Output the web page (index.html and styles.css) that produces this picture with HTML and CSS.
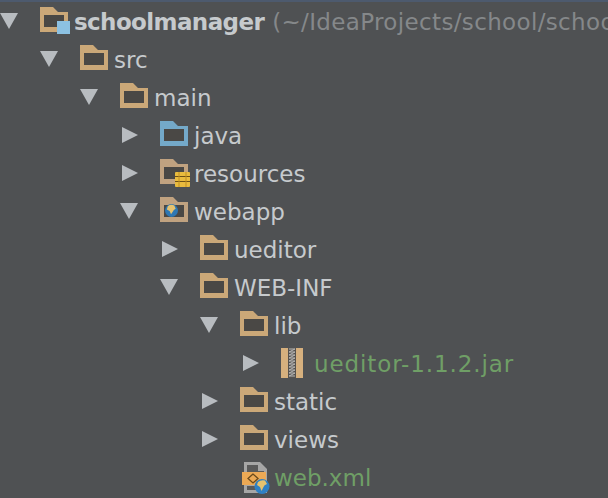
FILE: index.html
```html
<!DOCTYPE html>
<html lang="en">
<head>
    <meta charset="UTF-8">
    <title>Project tree</title>
    <link rel="stylesheet" href="styles.css">
</head>
<body>
    <svg class="defs" width="0" height="0">
        <symbol id="arrow-down" viewBox="0 0 18 18"><path d="M0 1H18L9 17Z"/></symbol>
        <symbol id="arrow-right" viewBox="0 0 18 18"><path d="M2 1L18 9L2 17Z"/></symbol>
        <symbol id="folder" viewBox="0 0 28 25">
            <path d="M0 0H13L18 5H28V25H0Z" fill="currentColor"/>
            <rect x="4" y="8" width="20" height="12" fill="#4a4845"/>
        </symbol>
    </svg>

    <div class="topline"></div>
    <ul class="tree">
        <li class="row d0">
            <svg class="arrow"><use href="#arrow-down"/></svg>
            <span class="icon">
                <svg class="folder"><use href="#folder"/></svg>
                <span class="module-badge"></span>
            </span>
            <span class="name root">schoolmanager</span>
            <span class="name path">(~/IdeaProjects/school/schoolmanager)</span>
        </li>
        <li class="row d1">
            <svg class="arrow"><use href="#arrow-down"/></svg>
            <span class="icon"><svg class="folder"><use href="#folder"/></svg></span>
            <span class="name">src</span>
        </li>
        <li class="row d2">
            <svg class="arrow"><use href="#arrow-down"/></svg>
            <span class="icon"><svg class="folder"><use href="#folder"/></svg></span>
            <span class="name">main</span>
        </li>
        <li class="row d3">
            <svg class="arrow"><use href="#arrow-right"/></svg>
            <span class="icon"><svg class="folder blue"><use href="#folder"/></svg></span>
            <span class="name">java</span>
        </li>
        <li class="row d3">
            <svg class="arrow"><use href="#arrow-right"/></svg>
            <span class="icon">
                <svg class="folder muted"><use href="#folder"/></svg>
                <svg class="coins" viewBox="0 0 15 15">
                    <rect width="15" height="15" rx="1" fill="#e9bb3e"/>
                    <path d="M0 4.500H15M0 9.500H15" stroke="#6b4f16" stroke-width="1.200"/>
                    <path d="M4 0V15M11 0V15" stroke="#c08f22" stroke-width="1"/>
                </svg>
            </span>
            <span class="name">resources</span>
        </li>
        <li class="row d3">
            <svg class="arrow"><use href="#arrow-down"/></svg>
            <span class="icon">
                <svg class="folder muted"><use href="#folder"/></svg>
                <svg class="globe" viewBox="0 0 14 14">
                    <circle cx="7" cy="7" r="7" fill="#2f78b4"/>
                    <path d="M3 2.500Q6 0 10 1.500L11.500 5Q9 6 8.500 8L6.500 11L5 7.500L2 6Z" fill="#e6c26e"/>
                </svg>
            </span>
            <span class="name">webapp</span>
        </li>
        <li class="row d4">
            <svg class="arrow"><use href="#arrow-right"/></svg>
            <span class="icon"><svg class="folder"><use href="#folder"/></svg></span>
            <span class="name">ueditor</span>
        </li>
        <li class="row d4">
            <svg class="arrow"><use href="#arrow-down"/></svg>
            <span class="icon"><svg class="folder"><use href="#folder"/></svg></span>
            <span class="name">WEB-INF</span>
        </li>
        <li class="row d5">
            <svg class="arrow"><use href="#arrow-down"/></svg>
            <span class="icon"><svg class="folder"><use href="#folder"/></svg></span>
            <span class="name">lib</span>
        </li>
        <li class="row d6">
            <svg class="arrow"><use href="#arrow-right"/></svg>
            <span class="icon jar-icon">
                <svg class="jar" viewBox="0 0 22 30">
                    <rect width="22" height="30" fill="#d6b07e"/>
                    <rect x="7" width="8" height="30" fill="#55524f"/>
                    <path d="M8 1H14L8 4H14L8 7H14L8 10H14L8 13H14L8 16H14L8 19H14L8 22H14L8 25H14L8 28H14" fill="none" stroke="#b9b9b9"/>
                </svg>
            </span>
            <span class="name jar-name">ueditor-1.1.2.jar</span>
        </li>
        <li class="row d5">
            <svg class="arrow"><use href="#arrow-right"/></svg>
            <span class="icon"><svg class="folder"><use href="#folder"/></svg></span>
            <span class="name">static</span>
        </li>
        <li class="row d5">
            <svg class="arrow"><use href="#arrow-right"/></svg>
            <span class="icon"><svg class="folder"><use href="#folder"/></svg></span>
            <span class="name">views</span>
        </li>
        <li class="row d5">
            <span class="arrow"></span>
            <span class="icon">
                <svg class="xml" viewBox="0 0 28 32">
                    <path d="M2 0H18L25 7V31H2Z" fill="#a6a6a6"/>
                    <path d="M5 3H16V9H22V10H5Z" fill="#5a5a5a"/>
                    <rect x="5" y="24" width="17" height="4" fill="#5a5a5a"/>
                    <rect y="10" width="24" height="13" fill="#eca955"/>
                    <path d="M11 12L6 16.500L11 21L16 16.500Z" fill="none" stroke="#6b4a1c" stroke-width="1.300"/>
                    <circle cx="20" cy="24.500" r="7.500" fill="#2f80c4"/>
                    <path d="M16 20Q19 17.500 23 18.500L25 22Q22 23 21.500 25L19.500 29L18 25L15 23Z" fill="#e6c26e"/>
                </svg>
            </span>
            <span class="name green">web.xml</span>
        </li>
    </ul>
</body>
</html>
```

FILE: styles.css
```css
/* Global styles */
html, body {
    margin: 0;
    padding: 0;
    height: 498px;
    overflow: hidden;
}

body {
    background-color: #4f5153;
    font-family: "DejaVu Sans", sans-serif;
    font-size: 23px;
    color: #c6cacd;
}

.defs {
    display: block;
    height: 0;
}

.topline {
    height: 2px;
    background-color: #4d5a6e;
}

.tree {
    list-style: none;
    margin: 0;
    padding: 0;
}

.row {
    display: flex;
    align-items: center;
    height: 38px;
    white-space: nowrap;
    overflow: hidden;
}

.d0 { padding-left: 0; }
.d1 { padding-left: 40px; }
.d2 { padding-left: 80px; }
.d3 { padding-left: 120px; }
.d4 { padding-left: 160px; }
.d5 { padding-left: 200px; }
.d6 { padding-left: 241px; }

.arrow {
    flex: none;
    width: 18px;
    height: 18px;
    margin-right: 22px;
    fill: #b8bcc0;
}

.icon {
    position: relative;
    top: -2px;
    flex: none;
    display: flex;
    width: 28px;
    height: 25px;
    margin-right: 6px;
}

.folder {
    width: 28px;
    height: 25px;
    color: #cba878;
}

.folder.muted {
    color: #c0a280;
}

.folder.blue {
    color: #74a9c9;
}

.module-badge {
    position: absolute;
    right: -2px;
    bottom: -2px;
    width: 13px;
    height: 13px;
    background-color: #8cc1e2;
}

.coins {
    position: absolute;
    right: -2px;
    bottom: -3px;
    width: 15px;
    height: 15px;
}

.globe {
    position: absolute;
    left: 5px;
    bottom: 5px;
    width: 13px;
    height: 13px;
}

.jar-icon {
    top: 0;
    width: 22px;
    height: 30px;
    margin-right: 11px;
}

.jar {
    width: 22px;
    height: 30px;
}

.xml {
    position: absolute;
    top: -1px;
    left: 2px;
    width: 28px;
    height: 32px;
}

.name {
    padding-top: 2px;
}

.root {
    font-weight: bold;
    letter-spacing: -0.6px;
    margin-right: 8px;
}

.path {
    color: #85888a;
    letter-spacing: 0.35px;
}

.jar-name,
.green {
    color: #6f9f66;
}

.jar-name {
    letter-spacing: 0.9px;
}
```
